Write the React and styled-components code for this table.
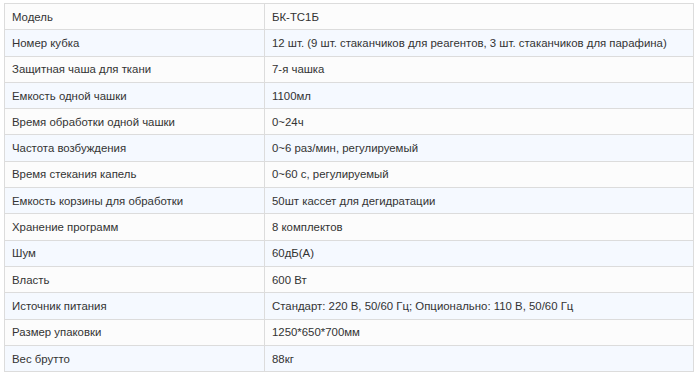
import React from "react";
import styled, { createGlobalStyle } from "styled-components";

const Global = createGlobalStyle`
  html, body { margin: 0; padding: 0; background: #fff; }
  body { font-family: "Liberation Sans", Arial, sans-serif; }
`;

const Page = styled.div`
  padding: 3px 3px 0 4px;
`;

const Table = styled.table`
  width: 690px;
  table-layout: fixed;
  border-collapse: collapse;
  border: 1px solid #dcdcdc;
  font-size: 11.4px;
  color: #333;
`;

const LabelCol = styled.col`
  width: 260px;
`;

const Row = styled.tr`
  background: ${(p) => (p.$alt ? "#f5f9ff" : "#fcfcfc")};
  height: 26.3px;
`;

const Cell = styled.td`
  border: 1px solid #dcdcdc;
  padding: 0 7px;
  line-height: 16px;
  white-space: nowrap;
  vertical-align: middle;
`;

const rows = [
  ["Модель", "БК-ТС1Б"],
  ["Номер кубка", "12 шт. (9 шт. стаканчиков для реагентов, 3 шт. стаканчиков для парафина)"],
  ["Защитная чаша для ткани", "7-я чашка"],
  ["Емкость одной чашки", "1100мл"],
  ["Время обработки одной чашки", "0~24ч"],
  ["Частота возбуждения", "0~6 раз/мин, регулируемый"],
  ["Время стекания капель", "0~60 с, регулируемый"],
  ["Емкость корзины для обработки", "50шт кассет для дегидратации"],
  ["Хранение программ", "8 комплектов"],
  ["Шум", "60дБ(A)"],
  ["Власть", "600 Вт"],
  ["Источник питания", "Стандарт: 220 В, 50/60 Гц; Опционально: 110 В, 50/60 Гц"],
  ["Размер упаковки", "1250*650*700мм"],
  ["Вес брутто", "88кг"],
];

export default function App() {
  return (
    <Page>
      <Global />
      <Table>
        <colgroup>
          <LabelCol />
          <col />
        </colgroup>
        <tbody>
          {rows.map(([k, v], i) => (
            <Row key={k} $alt={i % 2 === 1}>
              <Cell>{k}</Cell>
              <Cell>{v}</Cell>
            </Row>
          ))}
        </tbody>
      </Table>
    </Page>
  );
}
